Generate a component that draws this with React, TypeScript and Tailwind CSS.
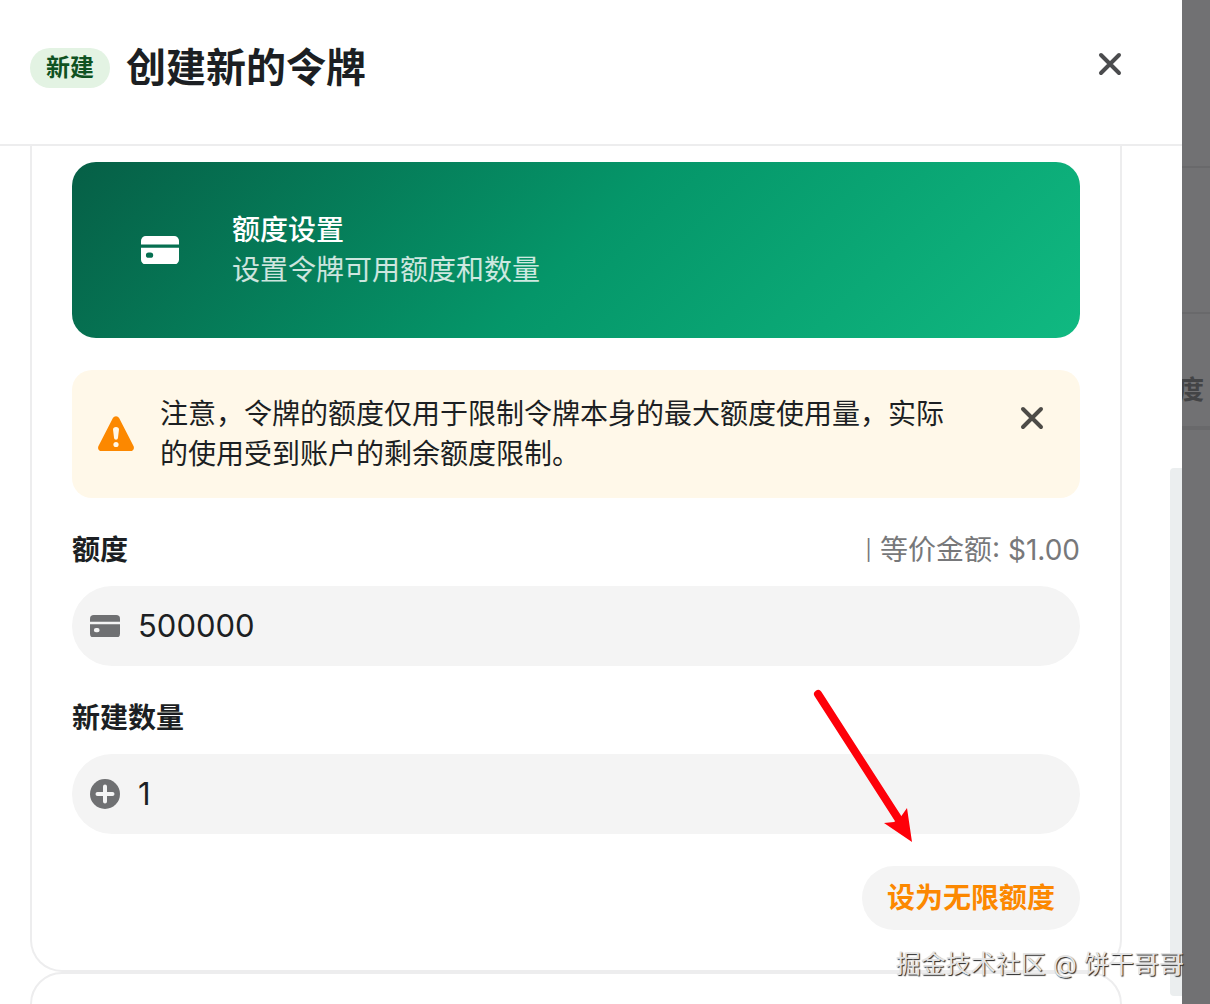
import React from 'react';

const CardIcon: React.FC<{ className?: string }> = ({ className }) => (
  <svg viewBox="0 0 24 18" className={className} fill="currentColor" aria-hidden="true">
    <path d="M0 5.4V3a3 3 0 0 1 3-3h18a3 3 0 0 1 3 3v2.4z" />
    <path
      fillRule="evenodd"
      d="M0 7.400h24V15a3 3 0 0 1-3 3H3a3 3 0 0 1-3-3zM4.800 10.400a1.700 1.700 0 0 0 0 3.400h1.200a1.700 1.700 0 0 0 0-3.400z"
    />
  </svg>
);

const CloseIcon: React.FC = () => (
  <svg viewBox="0 0 24 24" className="h-6 w-6" fill="none" aria-hidden="true">
    <path d="M3 3l18 18M21 3L3 21" stroke="currentColor" strokeWidth="4" strokeLinecap="round" />
  </svg>
);

const WarningIcon: React.FC = () => (
  <svg viewBox="0 0 40 40" className="h-10 w-10 shrink-0" aria-hidden="true">
    <path
      d="M16.9 4.1a3.5 3.5 0 0 1 6.2 0l14.4 27.8c1.1 2.1 0 5.1-2.600 5.100H5.100C2.500 37 1.400 34 2.500 31.900z"
      fill="#fc8800"
    />
    <path d="M17 15.500c0-1.600 1.200-2.500 3-2.500s3 .9 3 2.500l-1 8.300c-.2 1.300-.9 1.900-2 1.900s-1.800-.6-2-1.900z" fill="#fff8e9" />
    <circle cx="20" cy="30.500" r="2.600" fill="#fff8e9" />
  </svg>
);

const PlusIcon: React.FC = () => (
  <svg viewBox="0 0 30 30" className="w-[30px]" aria-hidden="true">
    <circle cx="15" cy="15" r="15" fill="#6f7072" />
    <path d="M15 7.500v15M7.500 15h15" stroke="#f4f4f4" strokeWidth="4" strokeLinecap="round" />
  </svg>
);

interface FieldProps {
  id: string;
  label: string;
  value: string;
  icon: React.ReactNode;
  extra?: React.ReactNode;
}

const Field: React.FC<FieldProps> = ({ id, label, value, icon, extra }) => (
  <div className="mt-8">
    <div className="flex items-center justify-between">
      <label htmlFor={id} className="font-semibold">
        {label}
      </label>
      {extra}
    </div>
    <div className="mt-4 flex h-20 items-center gap-[18px] rounded-full bg-[#f4f4f4] pr-8 pl-[18px] text-[#6f7072]">
      {icon}
      <input
        id={id}
        type="text"
        inputMode="numeric"
        defaultValue={value}
        className="min-w-0 flex-1 bg-transparent text-[31px] text-[#1c1f23] outline-none"
      />
    </div>
  </div>
);

const App: React.FC = () => {
  return (
    <div className="relative flex h-screen overflow-hidden bg-[#717173] font-[Inter,'Noto_Sans_CJK_SC',sans-serif] text-[28px] leading-10 text-[#1c1f23]">
      {/* Drawer */}
      <main className="relative flex min-w-0 flex-1 flex-col bg-white">
        <header className="flex shrink-0 items-start justify-between border-b-2 border-[#ededee] pt-10 pr-12 pb-12 pl-[30px]">
          <div className="flex h-14 items-center gap-4">
            <span className="rounded-full bg-[#e3f3e3] px-4 text-2xl leading-10 font-semibold text-[#0f5222]">新建</span>
            <h1 className="text-[40px] font-semibold">创建新的令牌</h1>
          </div>
          <button type="button" aria-label="关闭" className="flex h-12 w-12 items-center justify-center text-[#4b4c4e]">
            <CloseIcon />
          </button>
        </header>

        <div className="min-h-0 flex-1 overflow-hidden pr-[60px] pl-[30px]">
          {/* Quota settings */}
          <section className="rounded-b-[32px] border-2 border-t-0 border-[#ededee] px-10 pt-4 pb-10">
            <div className="flex items-center gap-8 rounded-3xl bg-[linear-gradient(135deg,#065f46_0%,#059669_50%,#10b981_100%)] p-12 text-white">
              <div className="flex h-20 w-20 items-center justify-center">
                <CardIcon className="w-[38px]" />
              </div>
              <div>
                <h2 className="font-medium">额度设置</h2>
                <p className="text-white/80">设置令牌可用额度和数量</p>
              </div>
            </div>

            <div role="alert" className="mt-8 flex items-center rounded-[20px] bg-[#fff8e9] p-6">
              <WarningIcon />
              <p className="ml-6 min-w-0 flex-1 pr-10">
                注意，令牌的额度仅用于限制令牌本身的最大额度使用量，实际的使用受到账户的剩余额度限制。
              </p>
              <button
                type="button"
                aria-label="关闭提示"
                className="flex h-12 w-12 shrink-0 items-center justify-center self-start text-[#4d4b47]"
              >
                <CloseIcon />
              </button>
            </div>

            <Field
              id="quota"
              label="额度"
              value="500000"
              extra={
                <span className="flex items-center gap-2 text-[#77787a]">
                  <span className="text-xl">|</span>
                  等价金额: $1.00
                </span>
              }
              icon={<CardIcon className="w-[30px]" />}
            />
            <Field id="count" label="新建数量" value="1" icon={<PlusIcon />} />

            <div className="mt-8 flex justify-end">
              <button type="button" className="h-16 rounded-full bg-[#f4f4f4] px-[25px] font-semibold text-[#fc8800]">
                设为无限额度
              </button>
            </div>
          </section>

          {/* Next section, cut off by the viewport */}
          <section className="h-40 rounded-t-[32px] border-2 border-[#ededee]" />
        </div>

        {/* Scrollbar thumb */}
        <div className="absolute right-0 bottom-2 h-[528px] w-3 rounded-l bg-[#ebeeef]" />
      </main>

      {/* Page behind the mask */}
      <aside className="flex w-7 shrink-0 flex-col overflow-hidden text-[#434446]">
        <div className="h-[168px] border-b-2 border-[#69696b]" />
        <div className="h-[146px] border-b-2 border-[#69696b]" />
        <div className="flex h-[116px] items-end border-b-4 border-[#69696b] pb-4">
          <span className="-ml-1 text-[26px] font-bold">度</span>
        </div>
      </aside>

      {/* Pointer to the unlimited quota button */}
      <svg
        viewBox="0 0 110 160"
        className="pointer-events-none absolute right-[290px] bottom-[158px] w-[110px]"
        aria-hidden="true"
      >
        <path d="M8 8L91 137" stroke="#fe0009" strokeWidth="8" strokeLinecap="round" />
        <path d="M102 156L97 122L90 132L84 136L74 137z" fill="#fe0009" />
      </svg>

      <span className="pointer-events-none absolute right-[26px] bottom-5 text-[25px] whitespace-nowrap text-[#e4e4e4] [text-shadow:1px_1px_1px_#222]">
        掘金技术社区 @ 饼干哥哥
      </span>
    </div>
  );
};

export default App;
